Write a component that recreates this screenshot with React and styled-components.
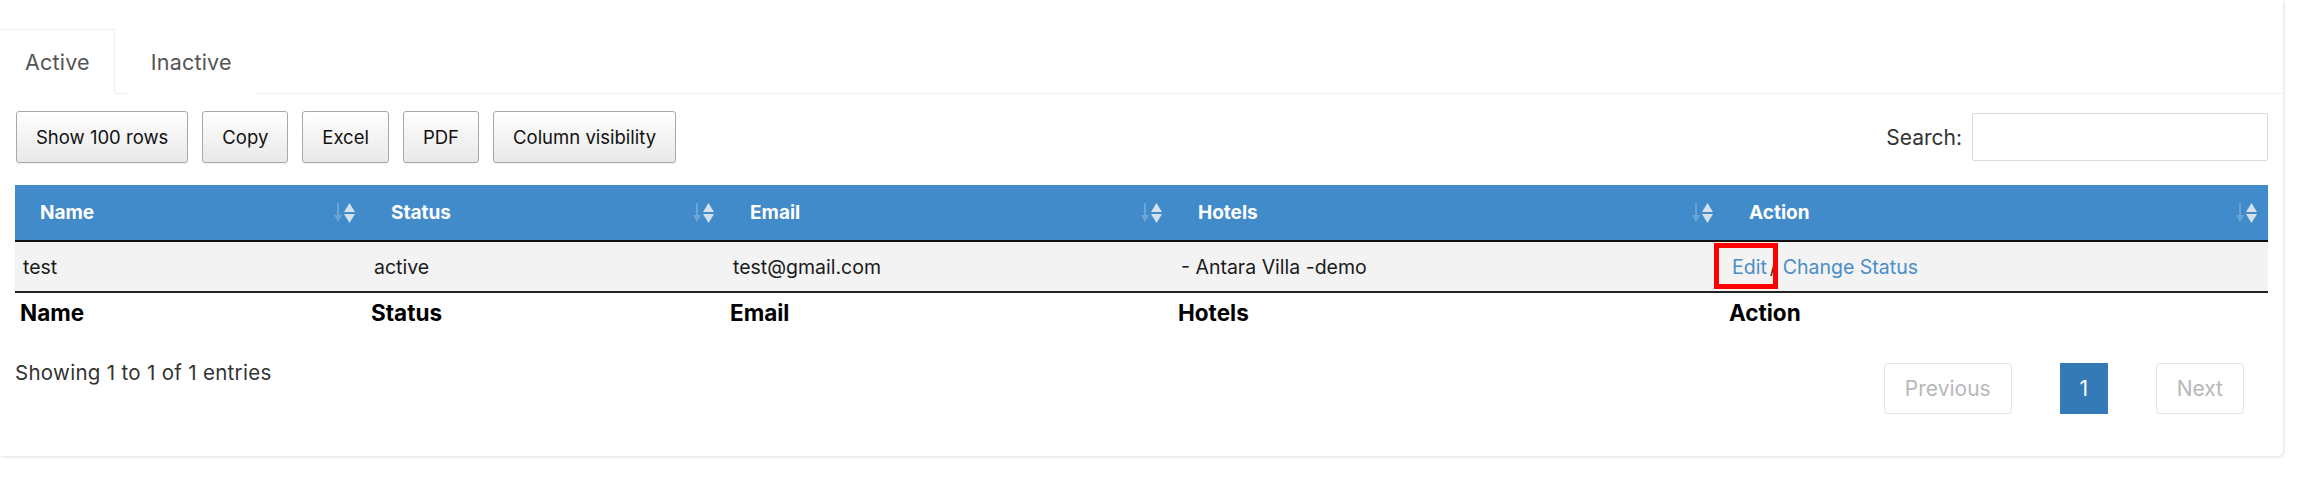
import React from 'react'
import styled, { createGlobalStyle } from 'styled-components'

const GlobalStyle = createGlobalStyle`
  html, body {
    margin: 0;
    padding: 0;
    background: #fff;
    font-family: Inter, "Open Sans", "Liberation Sans", sans-serif;
    color: #222;
  }
`

const Page = styled.div`
  width: 2304px;
  height: 498px;
  background: #fff;
`

const Card = styled.div`
  width: 2283px;
  height: 456px;
  box-sizing: border-box;
  padding-top: 29px;
  background: #fff;
  border-radius: 0 0 5px 0;
  box-shadow: 1px 1px 3px rgba(0, 0, 0, 0.12);
  display: flex;
  flex-direction: column;
`

const Tabs = styled.ul`
  display: flex;
  margin: 0;
  padding: 0;
  list-style: none;
  border-bottom: 1px solid #eeeeee;
  height: 64px;
`

const Tab = styled.li`
  box-sizing: border-box;
  height: 65px;
  display: flex;
  align-items: center;
  padding: 0 ${({ $active }) => ($active ? '24px 0 25px' : '22px')};
  margin-left: ${({ $active }) => ($active ? '0' : '14px')};
  font-size: 21.5px;
  letter-spacing: 0.2px;
  color: #555;
  background: #fff;
  border: 1px solid ${({ $active }) => ($active ? '#eeeeee' : 'transparent')};
  border-left: none;
  border-bottom-color: ${({ $active }) => ($active ? '#fff' : 'transparent')};
`

const Toolbar = styled.div`
  display: flex;
  align-items: center;
  justify-content: space-between;
  padding: 17px 15px 0 16px;
`

const ButtonGroup = styled.div`
  display: flex;
  gap: 14px;
`

const ToolButton = styled.button`
  height: 52px;
  padding: 0 19px;
  font-family: inherit;
  font-size: 18.5px;
  color: #111;
  border: 1px solid #a9a9a9;
  border-radius: 3px;
  background: linear-gradient(to bottom, #ffffff 0%, #e8e8e8 100%);
  box-shadow: 0 1px 1px rgba(0, 0, 0, 0.06);
`

const SearchLabel = styled.label`
  display: flex;
  align-items: center;
  gap: 10px;
  font-size: 21px;
  color: #333;
`

const SearchInput = styled.input`
  width: 296px;
  height: 48px;
  box-sizing: border-box;
  border: 1px solid #d6d9df;
  border-radius: 2px;
  outline: none;
`

const TableWrap = styled.div`
  padding: 22px 15px 0 15px;
`

const Table = styled.table`
  width: 2253px;
  table-layout: fixed;
  border-collapse: collapse;
`

const HeadCell = styled.th`
  height: 55px;
  padding: 0 9px 0 25px;
  background: #418bca;
  color: #fff;
  font-size: 19px;
  font-weight: 700;
  text-align: left;
  border-bottom: 2px solid #111;
`

const HeadInner = styled.div`
  display: flex;
  align-items: center;
  justify-content: space-between;
`

const BodyRow = styled.tr`
  background: #f3f3f3;
`

const Cell = styled.td`
  height: 49px;
  padding: 0 8px;
  font-size: 19.5px;
  color: #1a1a1a;
`

const FootCell = styled.th`
  height: 38px;
  padding: 0 5px;
  text-align: left;
  font-size: 22.5px;
  font-weight: 700;
  color: #000;
  border-top: 2px solid #222;
`

const Actions = styled.span`
  position: relative;
  display: inline-flex;
  align-items: center;
  gap: 6px;
`

const Link = styled.a`
  color: #4a8dc9;
  text-decoration: none;
`

const Sep = styled.span`
  color: #333;
  margin-left: -3px;
`

const Highlight = styled.span`
  position: absolute;
  left: -18px;
  top: -12px;
  width: 64px;
  height: 46px;
  box-sizing: border-box;
  border: 5px solid #ff0000;
`

const Footer = styled.div`
  display: flex;
  justify-content: space-between;
  align-items: flex-start;
  padding: 0 39px 0 15px;
  margin-top: 29px;
`

const Info = styled.div`
  font-size: 20.5px;
  letter-spacing: 0.3px;
  color: #333;
`

const Pager = styled.div`
  display: flex;
  gap: 48px;
  margin-top: 3px;
`

const PageButton = styled.span`
  box-sizing: border-box;
  height: 51px;
  min-width: ${({ $current }) => ($current ? '48px' : '0')};
  padding: 0 ${({ $current }) => ($current ? '0' : '20px')};
  display: flex;
  align-items: center;
  justify-content: center;
  font-size: 21px;
  color: ${({ $current }) => ($current ? '#fff' : '#b8b8b8')};
  background: ${({ $current }) => ($current ? '#337ab7' : '#fff')};
  border: 1px solid ${({ $current }) => ($current ? '#337ab7' : '#e4e4e4')};
  border-radius: ${({ $current }) => ($current ? '0' : '4px')};
`

const SortIcon = () => (
  <svg width="24" height="24" viewBox="0 0 24 24">
    <g fill="#ffffff" opacity="0.22">
      <rect x="4" y="2" width="2" height="15" />
      <path d="M1 14 L5 21 L9 14 Z" />
    </g>
    <g fill="#e6ebf2" opacity="0.9">
      <path d="M11 11 L16.5 2 L22 11 Z" />
      <path d="M11 13 L16.5 22 L22 13 Z" />
    </g>
  </svg>
)

const columns = [
  { label: 'Name', width: 351 },
  { label: 'Status', width: 359 },
  { label: 'Email', width: 448 },
  { label: 'Hotels', width: 551 },
  { label: 'Action', width: 544 },
]

export default function App() {
  return (
    <Page>
      <GlobalStyle />
      <Card>
        <Tabs>
          <Tab $active>Active</Tab>
          <Tab>Inactive</Tab>
        </Tabs>
        <Toolbar>
          <ButtonGroup>
            <ToolButton>Show 100 rows</ToolButton>
            <ToolButton>Copy</ToolButton>
            <ToolButton>Excel</ToolButton>
            <ToolButton>PDF</ToolButton>
            <ToolButton>Column visibility</ToolButton>
          </ButtonGroup>
          <SearchLabel>
            Search:
            <SearchInput type="search" />
          </SearchLabel>
        </Toolbar>
        <TableWrap>
          <Table>
            <colgroup>
              {columns.map((c) => (
                <col key={c.label} style={{ width: c.width }} />
              ))}
            </colgroup>
            <thead>
              <tr>
                {columns.map((c) => (
                  <HeadCell key={c.label}>
                    <HeadInner>
                      {c.label}
                      <SortIcon />
                    </HeadInner>
                  </HeadCell>
                ))}
              </tr>
            </thead>
            <tbody>
              <BodyRow>
                <Cell>test</Cell>
                <Cell>active</Cell>
                <Cell>test@gmail.com</Cell>
                <Cell>- Antara Villa -demo</Cell>
                <Cell>
                  <Actions>
                    <Link href="#">Edit</Link>
                    <Sep>/</Sep>
                    <Link href="#">Change Status</Link>
                    <Highlight />
                  </Actions>
                </Cell>
              </BodyRow>
            </tbody>
            <tfoot>
              <tr>
                {columns.map((c) => (
                  <FootCell key={c.label}>{c.label}</FootCell>
                ))}
              </tr>
            </tfoot>
          </Table>
        </TableWrap>
        <Footer>
          <Info>Showing 1 to 1 of 1 entries</Info>
          <Pager>
            <PageButton>Previous</PageButton>
            <PageButton $current>1</PageButton>
            <PageButton>Next</PageButton>
          </Pager>
        </Footer>
      </Card>
    </Page>
  )
}
